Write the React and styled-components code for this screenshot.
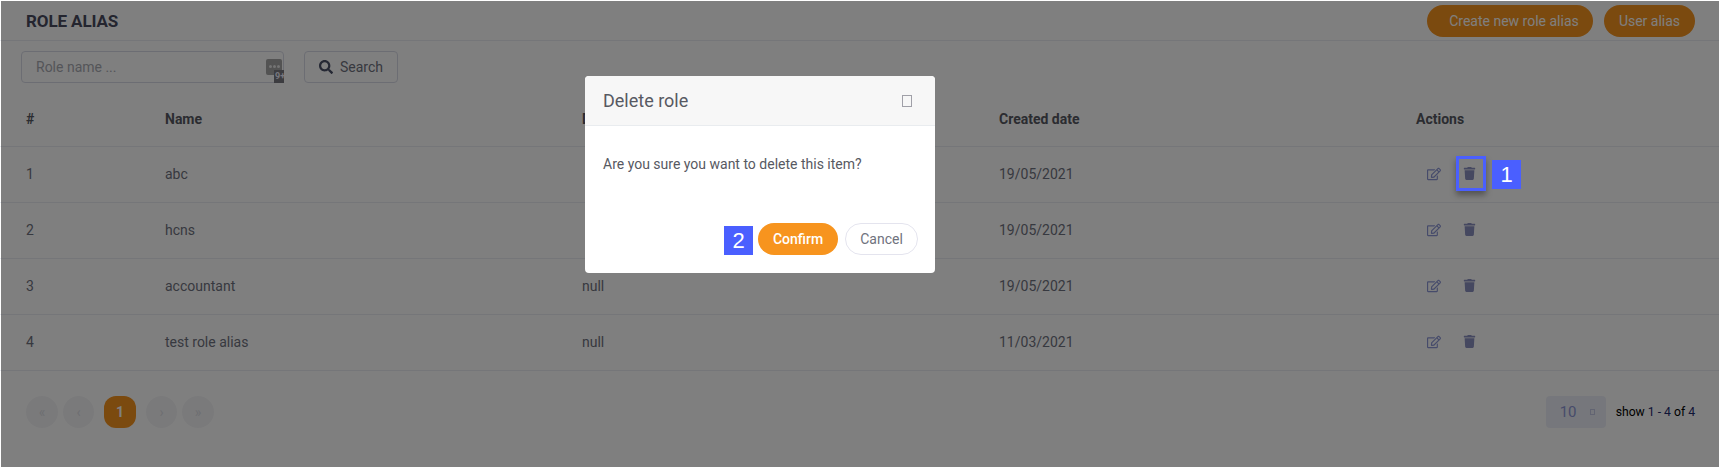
import React from "react";
import styled, { createGlobalStyle } from "styled-components";
import { FaRegEdit, FaTrash, FaSearch } from "react-icons/fa";

const Global = createGlobalStyle`
  html, body { margin: 0; padding: 0; background: #fff; }
  body { font-family: Roboto, "Liberation Sans", sans-serif; color: #575962; width: 1719px; height: 467px; overflow: hidden; }
  * { box-sizing: border-box; }
`;

const Page = styled.div`position: relative; width: 1719px; height: 467px; background: #fff; overflow: hidden;`;
const Header = styled.header`
  height: 41px; display: flex; align-items: center; justify-content: space-between;
  padding: 1px 24px 0 26px; border-bottom: 1px solid #ebedf2;
`;
const Title = styled.h1`margin: 0; font-size: 17px; font-weight: 700; color: #484a5e; letter-spacing: -.1px;`;
const HeaderActions = styled.div`display: flex; gap: 11px;`;
const Pill = styled.button`
  height: 32px; border: 0; border-radius: 16px; background: #f7941e; color: #fff; white-space: nowrap;
  font: 400 14px Roboto, sans-serif; padding: ${p => p.$wide ? "0 14px 0 22px" : "0"}; width: ${p => p.$w}px;
`;
const Filters = styled.div`display: flex; gap: 20px; padding: 10px 21px 0;`;
const InputWrap = styled.div`
  position: relative; width: 263px; height: 32px; border: 1px solid #d9dbe6; border-radius: 4px;
  padding-left: 14px; display: flex; align-items: center; font-size: 14px; color: #a9abb3;
`;
const ManagerIcon = styled.span`
  position: absolute; right: 1px; top: 7px; width: 16px; height: 16px; border-radius: 2px; background: #a6a6a6;
  display: flex; align-items: flex-start; justify-content: center; gap: 1px; padding-top: 6px;
  i { width: 3px; height: 3px; border-radius: 50%; background: #e8e8e8; }
`;
const ManagerBadge = styled.span`
  position: absolute; right: -2px; bottom: -8px; width: 10px; height: 13px; background: #787880; color: #f0f0ff;
  font: 700 9px/13px Roboto, sans-serif; overflow: hidden; white-space: nowrap; padding-left: 1px;
`;
const SearchButton = styled.button`
  width: 94px; height: 32px; border: 1px solid #d9dbe6; border-radius: 4px; background: #fff; color: #6f7280;
  display: flex; align-items: center; justify-content: center; gap: 7px; font: 400 14px Roboto, sans-serif;
  svg { color: #4a5068; font-size: 14px; }
`;
const Table = styled.div`margin-top: 9px;`;
const Row = styled.div`
  display: grid; grid-template-columns: 139px 417px 417px 417px 1fr; align-items: center;
  height: ${p => p.$h}px; padding: 0 0 ${p => p.$head ? 0 : 2}px 26px;
  border-bottom: 1px solid #ebedf2;
  font-size: 14px; color: ${p => p.$head ? "#575962" : "#6f7280"}; font-weight: ${p => p.$head ? 700 : 400};
`;
const Actions = styled.div`
  display: flex; align-items: center; gap: 22px; color: #8d97d6; padding-left: 11px; font-size: 14px;
  svg:last-child { color: #8b90c0; font-size: 13px; }
`;
const Footer = styled.footer`
  display: flex; align-items: center; justify-content: space-between; padding: 25px 24px 0 26px;
`;
const Pager = styled.div`display: flex; align-items: center;`;
const PageBtn = styled.span`
  width: ${p => p.$w || 32}px; height: 32px; border-radius: ${p => p.$active ? "12px" : "50%"}; margin: ${p => p.$m};
  background: ${p => p.$active ? "#f7941e" : "#f5f5f7"}; color: ${p => p.$active ? "#fff" : "#dcdde4"};
  display: flex; align-items: center; justify-content: center; font-size: 14px; font-weight: ${p => p.$active ? 700 : 400};
`;
const PageInfo = styled.div`display: flex; align-items: center; gap: 10px; font-size: 12.2px; color: #000;`;
const SizeSelect = styled.div`
  width: 60px; height: 32px; border-radius: 4px; background: #edeff8; color: #8d97d6; font-size: 15px;
  display: flex; align-items: center; padding-left: 14px; gap: 13px;
`;
const Tofu = styled.span`
  display: inline-block; width: ${p => p.$w}px; height: ${p => p.$h}px; border: 1px solid ${p => p.$c};
`;
const InfoNum = styled.span`color: #1e2a6e;`;
const Overlay = styled.div`position: absolute; inset: 1px 0 0 1px; background: rgba(0,0,0,.5);`;
const Modal = styled.div`
  position: absolute; left: 585px; top: 76px; width: 350px; height: 197px; background: #fff; border-radius: 4px; overflow: hidden;
  display: flex; flex-direction: column;
`;
const ModalHead = styled.div`
  height: 50px; background: #f7f7f7; border-bottom: 1px solid #e9ecef;
  display: flex; align-items: center; justify-content: space-between; padding: 0 23px 0 18px;
  font-size: 18px; color: #575962;
`;
const ModalBody = styled.div`padding: 30px 18px 0; font-size: 14px; color: #575962; flex: 1;`;
const ModalFoot = styled.div`display: flex; justify-content: flex-end; gap: 7px; padding: 0 17px 18px 0;`;
const Confirm = styled.button`
  width: 80px; height: 32px; border: 0; border-radius: 16px; background: #f7941e; color: #fff; font: 500 14px Roboto, sans-serif;
`;
const Cancel = styled.button`
  width: 73px; height: 32px; border: 1px solid #e4e4ee; border-radius: 16px; background: #fff; color: #6f727d; font: 400 14px Roboto, sans-serif;
`;
const Badge = styled.span`
  position: absolute; left: ${p => p.$x}px; top: ${p => p.$y}px; width: 29px; height: 29px; background: #4a5fff; color: #fff;
  font: 400 22px/29px "Liberation Sans", sans-serif; text-align: center;
`;
const Highlight = styled.span`
  position: absolute; left: 1456px; top: 156px; width: 30px; height: 35px; border: 3px solid #4a5fff;
  box-shadow: 0 4px 6px rgba(0,0,0,.35);
`;

const rows = [
  ["1", "abc", "", "19/05/2021"],
  ["2", "hcns", "", "19/05/2021"],
  ["3", "accountant", "null", "19/05/2021"],
  ["4", "test role alias", "null", "11/03/2021"],
];

export default function App() {
  return (
    <Page>
      <Global />
      <Header>
        <Title>ROLE ALIAS</Title>
        <HeaderActions>
          <Pill $wide $w={166}>Create new role alias</Pill>
          <Pill $w={91}>User alias</Pill>
        </HeaderActions>
      </Header>
      <Filters>
        <InputWrap>
          Role name ...
          <ManagerIcon><i /><i /><i /><ManagerBadge>9+</ManagerBadge></ManagerIcon>
        </InputWrap>
        <SearchButton><FaSearch />Search</SearchButton>
      </Filters>
      <Table>
        <Row $head $h={55}>
          <span>#</span><span>Name</span><span>Description</span><span>Created date</span><span>Actions</span>
        </Row>
        {rows.map(r => (
          <Row key={r[0]} $h={56}>
            <span>{r[0]}</span><span>{r[1]}</span><span>{r[2]}</span><span>{r[3]}</span>
            <Actions><FaRegEdit /><FaTrash /></Actions>
          </Row>
        ))}
      </Table>
      <Footer>
        <Pager>
          <PageBtn>«</PageBtn>
          <PageBtn $w={31} $m="0 0 0 5px">‹</PageBtn>
          <PageBtn $active $m="0 10px">1</PageBtn>
          <PageBtn $w={31}>›</PageBtn>
          <PageBtn $m="0 0 0 5px">»</PageBtn>
        </Pager>
        <PageInfo>
          <SizeSelect>10<Tofu $w={5} $h={6} $c="#c5c9e4" /></SizeSelect>
          <span>show <InfoNum>1 - 4</InfoNum> of <InfoNum>4</InfoNum></span>
        </PageInfo>
      </Footer>
      <Overlay />
      <Modal>
        <ModalHead>Delete role<Tofu $w={10} $h={12} $c="#a0a0a8" /></ModalHead>
        <ModalBody>Are you sure you want to delete this item?</ModalBody>
        <ModalFoot>
          <Confirm>Confirm</Confirm>
          <Cancel>Cancel</Cancel>
        </ModalFoot>
      </Modal>
      <Highlight />
      <Badge $x={1492} $y={160}>1</Badge>
      <Badge $x={724} $y={226}>2</Badge>
    </Page>
  );
}
